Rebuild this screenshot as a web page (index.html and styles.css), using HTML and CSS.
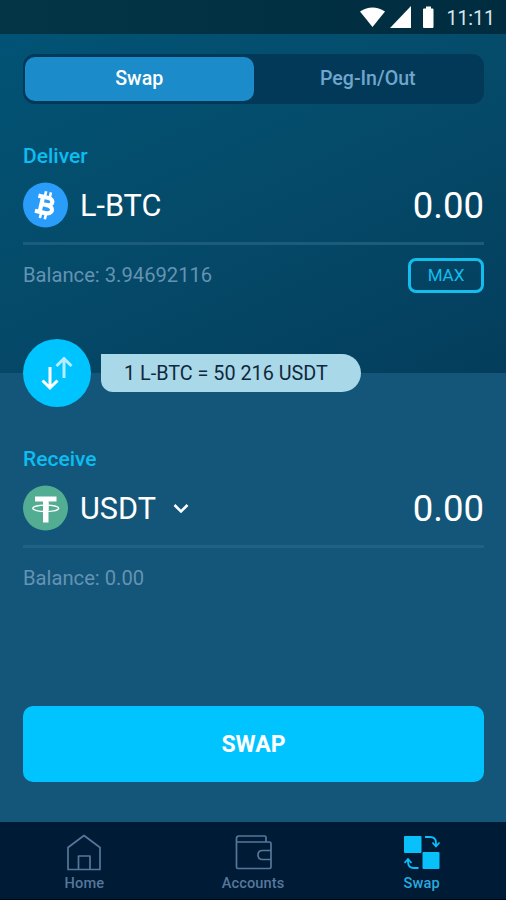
FILE: index.html
```html
<!DOCTYPE html>
<html lang="en">
<head>
  <meta charset="UTF-8">
  <meta name="viewport" content="width=device-width, initial-scale=1.0">
  <title>Swap</title>
  <link rel="stylesheet" href="styles.css">
</head>
<body>
  <div class="app">
    <header class="status-bar">
      <svg class="status-icons" width="78" height="24" viewBox="0 0 78 24">
        <path d="M1 5.500Q13.500-2.500 26 5.500L13.500 21Z"/>
        <path d="M52 0V22H31Z"/>
        <path d="M67 .500h5v2h1.500q1 0 1 1V21q0 1-1 1h-8.500q-1 0-1-1V3.500q0-1 1-1h2z"/>
      </svg>
      <span class="time">11:11</span>
    </header>

    <section class="deliver">
      <div class="tabs">
        <button class="tab active">Swap</button>
        <button class="tab">Peg-In/Out</button>
      </div>

      <h2 class="label">Deliver</h2>
      <div class="asset-row">
        <svg class="coin" width="46" height="46" viewBox="0 0 46 46">
          <circle cx="22.500" cy="23" r="22.500" fill="#2a9cf9"/>
          <g transform="rotate(13 22.500 23)" fill="none" stroke="#fff" stroke-width="4.200">
            <path d="M13.500 15.500H24C30 15.500 30 22.800 24 22.800H19M24 22.800C32 22.800 32 31 24 31H13.500M18.300 15.500V31"/>
            <path stroke-width="2.600" d="M20 9.500V15M25 9.500V15M20 31V37M25 31V37"/>
          </g>
        </svg>
        <span class="asset">L-BTC</span>
        <span class="amount">0.00</span>
      </div>
      <div class="balance-row">
        <span>Balance: 3.94692116</span>
        <button class="btn-max">MAX</button>
      </div>
    </section>

    <div class="rate-row">
      <button class="btn-flip" aria-label="Switch assets">
        <svg width="68" height="68" viewBox="0 0 68 68" fill="none" stroke="#fff" stroke-width="3">
          <path d="M27 28V49M19.500 41.500L27 49L34.500 41.500"/>
          <path opacity=".7" d="M41 39V20M33.500 27L41 19.500L48.500 27"/>
        </svg>
      </button>
      <div class="rate">1 L-BTC = 50 216 USDT</div>
    </div>

    <section class="receive">
      <h2 class="label">Receive</h2>
      <div class="asset-row">
        <svg class="coin" width="46" height="46" viewBox="0 0 46 46">
          <circle cx="22.500" cy="23" r="22.500" fill="#53ad92"/>
          <path fill="#fff" d="M12 11.500H33.500V16.500H25.500V37.500H20V16.500H12Z"/>
          <ellipse cx="22.700" cy="23.300" rx="13" ry="3.200" fill="none" stroke="#fff" stroke-width="1.300"/>
          <path fill="#fff" d="M20 17H25.500V25H20Z"/>
        </svg>
        <span class="asset">USDT</span>
        <svg class="chevron" width="16" height="12" viewBox="0 0 16 12" fill="none" stroke="#fff" stroke-width="2.600">
          <path d="M1.500 2L8 8.500L14.500 2"/>
        </svg>
        <span class="amount">0.00</span>
      </div>
      <div class="balance-row">
        <span>Balance: 0.00</span>
      </div>
      <button class="btn-swap">SWAP</button>
    </section>

    <nav class="bottom-nav">
      <a class="nav-item">
        <svg width="40" height="38" viewBox="0 0 40 38" fill="none" stroke="currentColor" stroke-width="1.700" stroke-linejoin="round">
          <path d="M4 14.500L20 2.500L36 14.500V36.500H4Z"/>
          <path d="M14.500 36.500V23H26V36.500"/>
        </svg>
        <span>Home</span>
      </a>
      <a class="nav-item">
        <svg width="40" height="38" viewBox="0 0 40 38" fill="none" stroke="currentColor" stroke-width="1.700" stroke-linejoin="round">
          <path d="M33 9V4.500Q33 3 31.500 3H6Q3.500 3 3.500 5.500V34Q3.500 35.500 5 35.500H36.500Q38 35.500 38 34V10.500Q38 9 36.500 9H3.500"/>
          <path d="M38 17.500H29.500Q25 17.500 25 22T29.500 26.500H38"/>
        </svg>
        <span>Accounts</span>
      </a>
      <a class="nav-item active">
        <svg width="40" height="38" viewBox="0 0 40 38" fill="none" stroke="currentColor" stroke-width="1.800">
          <rect x="2" y="3" width="17.500" height="17" rx="1" fill="currentColor" stroke="none"/>
          <rect x="20.500" y="19" width="17" height="17" rx="1" fill="currentColor" stroke="none"/>
          <path d="M23 4H28Q34 4 34 10V13M30.500 9.500L34 13.500L37.500 9.500"/>
          <path d="M16.500 35H12Q6 35 6 29V26M2.500 30L6 26L9.500 30"/>
        </svg>
        <span>Swap</span>
      </a>
    </nav>
  </div>
</body>
</html>
```

FILE: styles.css
```css
* {
  box-sizing: border-box;
}

body {
  margin: 0;
  font-family: Roboto, sans-serif;
  background-color: #135679;
  color: #fff;
}

button {
  font-family: inherit;
  border: none;
  padding: 0;
  cursor: pointer;
}

.app {
  display: flex;
  flex-direction: column;
  height: 900px;
}

.status-bar {
  display: flex;
  justify-content: flex-end;
  gap: 9px;
  height: 34px;
  padding: 6px 11px 0 0;
  background: linear-gradient(90deg, #033547, #002c3f);
}

.status-icons {
  fill: #fff;
}

.time {
  padding-top: 1px;
  font-size: 19.5px;
  line-height: 24px;
  color: #dce6eb;
}

.deliver {
  height: 339px;
  padding: 20px 22px 0 23px;
  background: linear-gradient(155deg, #015375 0%, #054b6a 45%, #043d5c 100%);
}

.tabs {
  display: flex;
  height: 50px;
  padding: 3px 2px;
  border-radius: 12px;
  background-color: #033958;
}

.tab {
  flex: 1;
  padding-bottom: 2px;
  font-size: 19.6px;
  font-weight: 500;
  border-radius: 10px;
  background: none;
  color: #70a6ce;
}

.tab.active {
  background-color: #1b8bc9;
  color: #fff;
}

.label {
  margin: 0;
  font-size: 21px;
  line-height: 24px;
  font-weight: 500;
  color: #0dbdf1;
}

.deliver .label {
  margin-top: 40px;
}

.asset-row {
  display: flex;
  align-items: center;
  height: 77px;
  border-bottom: 3px solid #1b5b7b;
}

.coin {
  margin-right: 11px;
}

.asset {
  padding-top: 1px;
  font-size: 30.6px;
}

.chevron {
  margin: 1px 0 0 17px;
}

.amount {
  margin-left: auto;
  padding-top: 1px;
  font-size: 36.5px;
}

.balance-row {
  display: flex;
  justify-content: space-between;
  align-items: center;
  height: 60px;
  font-size: 20.2px;
  color: #6493b3;
}

.btn-max {
  width: 76px;
  height: 35px;
  border: 3px solid #13bdee;
  border-radius: 8px;
  background: none;
  font-size: 17px;
  color: #13bdee;
}

.rate-row {
  display: flex;
  align-items: center;
  gap: 10px;
  height: 68px;
  margin: -34px 0 0 23px;
}

.btn-flip {
  width: 68px;
  height: 68px;
  border-radius: 50%;
  background-color: #00c4ff;
}

.btn-flip svg {
  display: block;
}

.rate {
  width: 260px;
  height: 38px;
  padding-left: 23px;
  border-radius: 0 19px 19px 12px;
  background-color: #a9d8e9;
  font-size: 19.8px;
  line-height: 39px;
  color: #10283c;
}

.receive {
  flex: 1;
  padding: 40px 22px 0 23px;
}

.receive .asset-row {
  border-bottom-color: #1e6284;
}

.btn-swap {
  width: 100%;
  height: 76px;
  margin-top: 98px;
  border-radius: 10px;
  background-color: #00c4ff;
  font-size: 23px;
  font-weight: 700;
  color: #fff;
}

.bottom-nav {
  display: flex;
  height: 78px;
  background-color: #001b36;
  border-bottom: 1px solid #00060d;
}

.nav-item {
  flex: 1;
  display: flex;
  flex-direction: column;
  align-items: center;
  padding-top: 11px;
  font-size: 14.6px;
  line-height: 24px;
  font-weight: 500;
  letter-spacing: 0.1px;
  color: #56779b;
}

.nav-item.active {
  color: #08c1fb;
}

.nav-item.active span {
  color: #29a9df;
}
```
